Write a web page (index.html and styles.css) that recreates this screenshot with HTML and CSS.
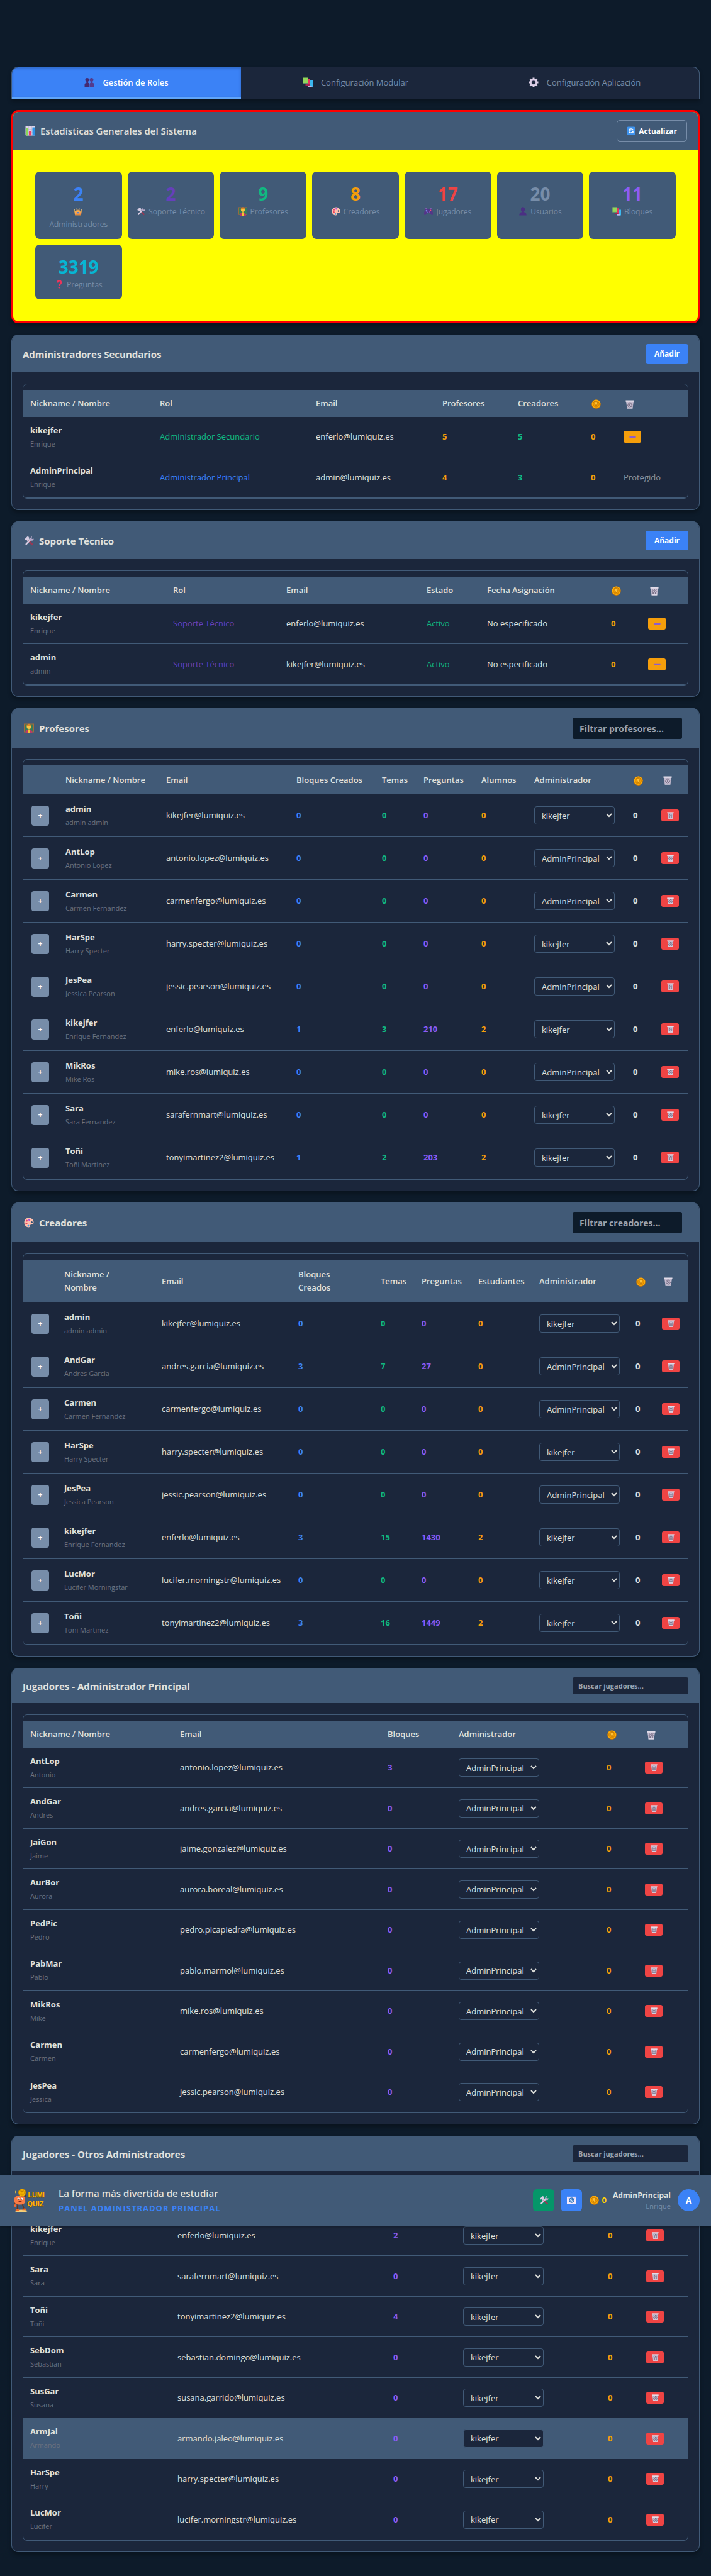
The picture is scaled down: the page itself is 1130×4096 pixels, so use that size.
FILE: index.html
```html
<!DOCTYPE html>
<html lang="es">
<head>
<meta charset="utf-8">
<meta name="viewport" content="width=device-width, initial-scale=1">
<title>LumiQuiz - Panel Administrador Principal</title>
<link rel="stylesheet" href="styles.css">
</head>
<body>
<svg class="sprite" aria-hidden="true">
  <symbol id="i-people" viewBox="0 0 32 32"><g fill="#432a72"><circle cx="9" cy="8" r="6"/><path d="M7 12h5v5c3 1 4 3 4 6v8H1v-8c0-3 2-5 6-6z"/></g><g fill="#533a8c"><circle cx="23" cy="8" r="6"/><path d="M20 12h6v5c4 1 5 3 5 6v8H17v-8c0-3 1-5 3-6z"/></g></symbol>
  <symbol id="i-person" viewBox="0 0 32 32"><g fill="#4b2f83"><ellipse cx="16" cy="9" rx="7" ry="8.500"/><path d="M12 14h8v5c6 1 9 4 9 12H3c0-8 3-11 9-12z"/></g></symbol>
  <symbol id="i-books" viewBox="0 0 32 32"><path fill="#3bb8f0" d="M18 10h14v21H16z"/><path fill="#c9b3e8" d="M16 27h13v4H16z"/><path fill="#e8305f" d="M11 5h13v20H11z"/><path fill="#a82350" d="M9 22h13v4H9z"/><path fill="#92d75a" d="M1 1h15v18H1z"/><path fill="#5e8d6a" d="M1 18h15v4H1z"/></symbol>
  <symbol id="i-gear" viewBox="0 0 32 32"><g fill="#dccfe6"><path d="M13 1h6v30h-6zM1 13h30v6H1z"/><path d="M13 1h6v30h-6zM1 13h30v6H1z" transform="rotate(45 16 16)"/><circle cx="16" cy="16" r="12"/></g><circle cx="16" cy="16" r="7" fill="#a996b8"/><circle cx="16" cy="16" r="5" fill="#1b263b"/></symbol>
  <symbol id="i-chart" viewBox="0 0 32 32"><rect x="1" y="1" width="30" height="30" rx="2" fill="#ded5e8"/><path d="M11 1v30M21 1v30M1 11h30M1 21h30" stroke="#b9a8c9"/><path fill="#8bd957" d="M2 8h8v23H2z"/><path fill="#ef3e68" d="M12 17h8v14h-8z"/><path fill="#2c93e6" d="M23 5h7v26h-7z"/></symbol>
  <symbol id="i-refresh" viewBox="0 0 32 32"><rect x="1" y="1" width="30" height="30" rx="4" fill="#3f94ef"/><g fill="none" stroke="#fff" stroke-width="3"><path d="M23 12a8 8 0 0 0-14 2M9 20a8 8 0 0 0 14-3"/><path d="M9 8v6h6M23 23v-6h-6"/></g></symbol>
  <symbol id="i-crown" viewBox="0 0 32 32"><path fill="#f8ad4d" d="M2 11l7 6 3-12 4 8 4-8 3 12 7-6-3 19H5z"/><path fill="#e68a35" d="M5 25h22v5H5z"/><circle cx="16" cy="21" r="3" fill="#4679df"/><g fill="#f15170"><circle cx="9" cy="22" r="2"/><circle cx="23" cy="22" r="2"/></g><g fill="#ffd38a"><circle cx="12" cy="4" r="2"/><circle cx="20" cy="4" r="2"/><circle cx="2" cy="10" r="2"/><circle cx="30" cy="10" r="2"/></g></symbol>
  <symbol id="i-tools" viewBox="0 0 32 32"><path d="M12 13l16 16" stroke="#963a55" stroke-width="6"/><path d="M3 10l8-8 6 2-2 2 3 5-6 6-4-4-3 1z" fill="#d5cce2"/><path d="M6 28l15-16" stroke="#d9cde3" stroke-width="5"/><path d="M19 9l5-7 2 1-2 5 2 2 5-1c1 5-3 8-9 6z" fill="#b9a9ca"/></symbol>
  <symbol id="i-teacher" viewBox="0 0 32 32"><path fill="#a06b3d" d="M0 1h32v28H0z"/><path fill="#377b58" d="M2 3h28v24H2z"/><path fill="#b93a68" d="M5 32c0-9 4-12 11-12s11 3 11 12z"/><path fill="#f6c42f" d="M13 19h6v13h-6z"/><circle cx="16" cy="11" r="7" fill="#fac342"/><path fill="#dc8426" d="M8 11c0-13 16-13 16 0-3-4-11-4-16 0z"/><path d="M13 15h6" stroke="#985522" stroke-width="2"/></symbol>
  <symbol id="i-palette" viewBox="0 0 32 32"><path fill="#ffc0ad" d="M16 1C6 1 1 8 1 16c0 9 7 15 14 15 6 0 2-6 6-8 3-2 10 1 10-8C31 7 25 1 16 1z"/><circle cx="25" cy="15" r="3" fill="#315073"/><circle cx="17" cy="7" r="3" fill="#b04de1"/><circle cx="9" cy="10" r="3" fill="#e74070"/><circle cx="8" cy="19" r="3" fill="#ea4158"/><circle cx="14" cy="26" r="3" fill="#3a9cec"/></symbol>
  <symbol id="i-pad" viewBox="0 0 32 32"><path fill="#543589" d="M6 7h20c4 3 6 13 6 21-3 4-8 0-10-5H10C8 28 3 32 0 28 0 20 2 10 6 7z"/><path fill="#8060b0" d="M5 4h6v3H5zM21 4h6v3h-6z"/><circle cx="9" cy="14" r="3" fill="#7488de"/><circle cx="21" cy="18" r="2" fill="#ba67c8"/><circle cx="24" cy="12" r="2" fill="#ec5972"/><circle cx="14" cy="19" r="2" fill="#6b88df"/></symbol>
  <symbol id="i-question" viewBox="0 0 32 32"><path d="M10 10c0-9 13-9 13 0 0 6-7 5-7 12" fill="none" stroke="#ee345b" stroke-width="5"/><circle cx="16" cy="28" r="3" fill="#ee345b"/></symbol>
  <symbol id="i-coin" viewBox="0 0 32 32"><circle cx="16" cy="16.500" r="15.500" fill="#c97400"/><circle cx="16" cy="15.500" r="14.500" fill="#ffae0b"/><circle cx="16" cy="15.500" r="10.500" fill="#f29b00" stroke="#c57d00" stroke-width="2"/><path d="M11 12c0-6 10-6 10 0 0 4-3 5-3 10h-4c0-5-3-6-3-10z" fill="#ffc239" stroke="#ad6900" stroke-width="1.500"/></symbol>
  <symbol id="i-bin" viewBox="0 0 32 32"><path fill="#c5bdd1" d="M2 3h28l-4 28H6z"/><path d="M8 9l15 17M14 8l11 12M7 17l8 10M24 9L9 26M18 8L7 20M25 17l-8 10" stroke="#70677e" stroke-width="2"/><path fill="#e2dce9" d="M1 1h30v5H1z"/><path fill="#ddd7e5" d="M6 27h20v4H6z"/></symbol>
  <symbol id="i-minus" viewBox="0 0 32 32"><rect x="1" y="14" width="30" height="6" rx="2" fill="#8b5ccf"/></symbol>
  <symbol id="i-mail" viewBox="0 0 32 32"><path fill="#f2e8fa" d="M0 4h32v24H0z"/><path fill="none" stroke="#d6c1e5" stroke-width="2" d="M1 5l15 13L31 5"/><circle cx="16" cy="16" r="9" fill="#2f72be"/><circle cx="16" cy="16" r="5" fill="none" stroke="#c7e1fb" stroke-width="2"/><circle cx="16" cy="16" r="2" fill="#c7e1fb"/></symbol>
</svg>

<main class="page">
  <nav class="tabs" aria-label="Secciones">
    <button class="tab tab-active" type="button"><svg class="icon"><use href="#i-people"/></svg>Gestión de Roles</button>
    <button class="tab" type="button"><svg class="icon"><use href="#i-books"/></svg>Configuración Modular</button>
    <button class="tab" type="button"><svg class="icon"><use href="#i-gear"/></svg>Configuración Aplicación</button>
  </nav>

  <section class="stats">
    <header class="panel-head">
      <h2 class="panel-title"><svg class="icon"><use href="#i-chart"/></svg>Estadísticas Generales del Sistema</h2>
      <button class="refresh" type="button"><svg class="icon"><use href="#i-refresh"/></svg>Actualizar</button>
    </header>
    <div class="stats-grid">
      <div class="stat"><strong class="stat-value blue">2</strong><span class="stat-label"><svg class="icon"><use href="#i-crown"/></svg> Administradores</span></div>
      <div class="stat"><strong class="stat-value violet">2</strong><span class="stat-label"><svg class="icon"><use href="#i-tools"/></svg> Soporte Técnico</span></div>
      <div class="stat"><strong class="stat-value green">9</strong><span class="stat-label"><svg class="icon"><use href="#i-teacher"/></svg> Profesores</span></div>
      <div class="stat"><strong class="stat-value orange">8</strong><span class="stat-label"><svg class="icon"><use href="#i-palette"/></svg> Creadores</span></div>
      <div class="stat"><strong class="stat-value red">17</strong><span class="stat-label"><svg class="icon"><use href="#i-pad"/></svg> Jugadores</span></div>
      <div class="stat"><strong class="stat-value muted">20</strong><span class="stat-label"><svg class="icon"><use href="#i-person"/></svg> Usuarios</span></div>
      <div class="stat"><strong class="stat-value purple">11</strong><span class="stat-label"><svg class="icon"><use href="#i-books"/></svg> Bloques</span></div>
      <div class="stat"><strong class="stat-value cyan">3319</strong><span class="stat-label"><svg class="icon"><use href="#i-question"/></svg> Preguntas</span></div>
    </div>
  </section>

  <section class="panel">
    <header class="panel-head">
      <h2 class="panel-title">Administradores Secundarios</h2>
      <button class="add" type="button">Añadir</button>
    </header>
    <div class="table-box">
      <table class="grid grid-admins">
        <thead><tr><th>Nickname / Nombre</th><th>Rol</th><th>Email</th><th>Profesores</th><th>Creadores</th><th><svg class="icon coin"><use href="#i-coin"/></svg></th><th><svg class="icon bin"><use href="#i-bin"/></svg></th></tr></thead>
        <tbody>
          <tr><td><b class="nick">kikejfer</b><span class="name">Enrique</span></td><td class="green">Administrador Secundario</td><td>enferlo@lumiquiz.es</td><td class="num orange">5</td><td class="num green">5</td><td class="num orange">0</td><td><button class="mini warn" type="button" aria-label="Quitar"><svg class="icon"><use href="#i-minus"/></svg></button></td></tr>
          <tr><td><b class="nick">AdminPrincipal</b><span class="name">Enrique</span></td><td class="blue">Administrador Principal</td><td>admin@lumiquiz.es</td><td class="num orange">4</td><td class="num green">3</td><td class="num orange">0</td><td class="locked">Protegido</td></tr>
        </tbody>
      </table>
    </div>
  </section>

  <section class="panel">
    <header class="panel-head">
      <h2 class="panel-title"><svg class="icon"><use href="#i-tools"/></svg>Soporte Técnico</h2>
      <button class="add" type="button">Añadir</button>
    </header>
    <div class="table-box">
      <table class="grid grid-support">
        <thead><tr><th>Nickname / Nombre</th><th>Rol</th><th>Email</th><th>Estado</th><th>Fecha Asignación</th><th><svg class="icon coin"><use href="#i-coin"/></svg></th><th><svg class="icon bin"><use href="#i-bin"/></svg></th></tr></thead>
        <tbody>
          <tr><td><b class="nick">kikejfer</b><span class="name">Enrique</span></td><td class="violet">Soporte Técnico</td><td>enferlo@lumiquiz.es</td><td class="green">Activo</td><td>No especificado</td><td class="num orange">0</td><td><button class="mini warn" type="button" aria-label="Quitar"><svg class="icon"><use href="#i-minus"/></svg></button></td></tr>
          <tr><td><b class="nick">admin</b><span class="name">admin</span></td><td class="violet">Soporte Técnico</td><td>kikejfer@lumiquiz.es</td><td class="green">Activo</td><td>No especificado</td><td class="num orange">0</td><td><button class="mini warn" type="button" aria-label="Quitar"><svg class="icon"><use href="#i-minus"/></svg></button></td></tr>
        </tbody>
      </table>
    </div>
  </section>

  <section class="panel">
    <header class="panel-head">
      <h2 class="panel-title"><svg class="icon"><use href="#i-teacher"/></svg>Profesores</h2>
      <input class="filter" type="text" placeholder="Filtrar profesores..." aria-label="Filtrar profesores">
    </header>
    <div class="table-box">
      <table class="grid grid-staff grid-teachers">
        <thead><tr><th></th><th>Nickname / Nombre</th><th>Email</th><th>Bloques Creados</th><th>Temas</th><th>Preguntas</th><th>Alumnos</th><th>Administrador</th><th><svg class="icon coin"><use href="#i-coin"/></svg></th><th><svg class="icon bin"><use href="#i-bin"/></svg></th></tr></thead>
        <tbody id="teachers"></tbody>
      </table>
    </div>
  </section>

  <section class="panel">
    <header class="panel-head">
      <h2 class="panel-title"><svg class="icon"><use href="#i-palette"/></svg>Creadores</h2>
      <input class="filter" type="text" placeholder="Filtrar creadores..." aria-label="Filtrar creadores">
    </header>
    <div class="table-box">
      <table class="grid grid-staff grid-creators">
        <thead><tr><th></th><th>Nickname /<br>Nombre</th><th>Email</th><th>Bloques<br>Creados</th><th>Temas</th><th>Preguntas</th><th>Estudiantes</th><th>Administrador</th><th><svg class="icon coin"><use href="#i-coin"/></svg></th><th><svg class="icon bin"><use href="#i-bin"/></svg></th></tr></thead>
        <tbody id="creators"></tbody>
      </table>
    </div>
  </section>

  <section class="panel">
    <header class="panel-head">
      <h2 class="panel-title">Jugadores - Administrador Principal</h2>
      <input class="search" type="text" placeholder="Buscar jugadores..." aria-label="Buscar jugadores del administrador principal">
    </header>
    <div class="table-box">
      <table class="grid grid-players">
        <thead><tr><th>Nickname / Nombre</th><th>Email</th><th>Bloques</th><th>Administrador</th><th><svg class="icon coin"><use href="#i-coin"/></svg></th><th><svg class="icon bin"><use href="#i-bin"/></svg></th></tr></thead>
        <tbody id="players-main"></tbody>
      </table>
    </div>
  </section>

  <div class="pin-area">
    <section class="panel">
      <header class="panel-head">
        <h2 class="panel-title">Jugadores - Otros Administradores</h2>
        <input class="search" type="text" placeholder="Buscar jugadores..." aria-label="Buscar jugadores de otros administradores">
      </header>
      <div class="table-box">
        <table class="grid grid-players grid-others">
          <thead><tr><th>Nickname / Nombre</th><th>Email</th><th>Bloques</th><th>Administrador</th><th><svg class="icon coin"><use href="#i-coin"/></svg></th><th><svg class="icon bin"><use href="#i-bin"/></svg></th></tr></thead>
          <tbody id="players-others"></tbody>
        </table>
      </div>
    </section>

    <header class="topbar">
      <svg class="logo" viewBox="0 0 60 42" role="img" aria-label="LumiQuiz">
        <ellipse cx="13" cy="39.500" rx="11" ry="2.300" fill="#f5cf78"/>
        <path d="M7 27l-1 10M15 27l3 9M3 22l-1 7M18 18l3-7" stroke="#63351f" stroke-width="2" fill="none"/>
        <path d="M3 39c0-3 3-4 6-3v3zM15 38c0-3 4-4 7-2v2z" fill="#f26522"/>
        <circle cx="2.500" cy="30" r="2.300" fill="#f26a35"/>
        <path d="M1 20c-1-6 5-8 9-7 5-2 11 1 10 7 1 6-4 9-9 8-6 1-11-2-10-8z" fill="#f97b45"/>
        <circle cx="8" cy="18" r="2" fill="#fff"/><circle cx="14" cy="18" r="2" fill="#fff"/><circle cx="8.500" cy="18.500" r="1" fill="#35221d"/><circle cx="13.500" cy="18.500" r="1" fill="#35221d"/>
        <path d="M8 22c2 3 4 3 6 0z" fill="#7c231c"/>
        <circle cx="14.500" cy="7" r="6.500" fill="#f7b500" stroke="#b87900"/><circle cx="14.500" cy="7" r="4" fill="none" stroke="#c98c00"/><path d="M13 9V5h3v4" stroke="#b87900" fill="none"/>
        <path d="M3 4v4M1 6h4" stroke="#ffd33d"/>
        <text class="logo-text" x="25" y="16">LUMI</text><text class="logo-text" x="24" y="31">QUIZ</text>
      </svg>
      <div class="brand"><p class="slogan">La forma más divertida de estudiar</p><p class="role">PANEL ADMINISTRADOR PRINCIPAL</p></div>
      <button class="square square-green" type="button" aria-label="Soporte"><svg class="icon"><use href="#i-tools"/></svg></button>
      <button class="square square-blue" type="button" aria-label="Mensajes"><svg class="icon"><use href="#i-mail"/></svg></button>
      <div class="balance"><svg class="icon"><use href="#i-coin"/></svg>0</div>
      <div class="user"><b class="user-nick">AdminPrincipal</b><span class="user-name">Enrique</span></div>
      <button class="avatar" type="button">A</button>
    </header>
  </div>
</main>
<script src="app.js"></script>
</body>
</html>
```
FILE: styles.css
```css
:root {
  --bg: #0d1b2a;
  --panel: #1b263b;
  --line: #415a77;
  --muted: #778da9;
  --text: #e0e1dd;
}

* { box-sizing: border-box; }

body {
  margin: 0;
  background: var(--bg);
  color: var(--text);
  font-family: "Open Sans", "Noto Sans", sans-serif;
  font-size: 13px;
  line-height: 21px;
}

h2, p { margin: 0; }
button, input, select { font-family: inherit; color: inherit; margin: 0; }
button { border: 0; padding: 0; cursor: pointer; }

.sprite { position: absolute; width: 0; height: 0; }
.icon { width: 14px; height: 14px; flex: none; }

.blue { color: #3b82f6; }
.violet { color: #6540bb; }
.green { color: #10b981; }
.orange { color: #f59e0b; }
.red { color: #ef4444; }
.muted { color: var(--muted); }
.purple { color: #8b5cf6; }
.cyan { color: #06b6d4; }

.page {
  display: flex;
  flex-direction: column;
  gap: 18px;
  padding: 106px 18px 36px;
}

.tabs {
  display: flex;
  height: 51px;
  background: var(--panel);
  border: 1px solid var(--line);
  border-bottom: 0;
  border-radius: 11px 11px 0 0;
  overflow: hidden;
  box-shadow: 0 4px 6px rgba(0, 0, 0, 0.3);
}
.tab {
  flex: 1;
  display: flex;
  align-items: center;
  justify-content: center;
  gap: 13px;
  background: none;
  border-bottom: 3px solid transparent;
  color: var(--muted);
  font-size: 13px;
  font-weight: 500;
}
.tab .icon { width: 16px; height: 16px; }
.tab-active {
  background: #3b82f6;
  border-bottom-color: #60a5fa;
  color: #fff;
  font-weight: 600;
  box-shadow: inset 0 2px 4px rgba(0, 0, 0, 0.2);
}

.stats {
  background: #ff0;
  border: 3px solid #f00;
  border-radius: 11px;
  overflow: hidden;
  box-shadow: 0 4px 6px rgba(0, 0, 0, 0.3);
}
.stats-grid {
  display: grid;
  grid-template-columns: repeat(7, 1fr);
  gap: 9px;
  padding: 35px;
}
.stat {
  display: flex;
  flex-direction: column;
  padding: 16px 12px 13px;
  background: var(--line);
  border-radius: 7px;
  text-align: center;
}
.stat-value { font-size: 28px; line-height: 38px; font-weight: 700; }
.stat-label { color: var(--muted); font-size: 12px; line-height: 20px; }
.stat-label .icon { vertical-align: -2px; margin-right: 2px; }
.stat:first-child .stat-label { padding: 0 8px; }

.panel-head {
  display: flex;
  align-items: center;
  justify-content: space-between;
  padding: 14px 18px;
  background: var(--line);
}
.stats .panel-head { padding: 13px 17px; }
.panel-title {
  display: flex;
  align-items: center;
  gap: 8px;
  font-size: 15px;
  line-height: 24px;
  font-weight: 700;
}
.stats .panel-title { font-weight: 600; }
.panel-title .icon { width: 16px; height: 16px; margin-left: 2px; }
.refresh {
  display: flex;
  align-items: center;
  gap: 5px;
  height: 34px;
  padding: 0 15px;
  background: none;
  border: 1px solid var(--muted);
  border-radius: 5px;
  color: #fff;
  font-size: 12px;
  font-weight: 700;
}
.add {
  height: 31px;
  padding: 0 14px;
  border-radius: 4px;
  background: #3b82f6;
  color: #fff;
  font-size: 12px;
  font-weight: 700;
}
.filter, .search {
  border: 0;
  border-radius: 3px;
  font-weight: 700;
}
.filter {
  width: 174px;
  height: 34px;
  margin-right: 10px;
  padding: 0 11px;
  background: var(--bg);
  font-size: 14px;
}
.search {
  width: 184px;
  height: 27px;
  padding: 0 9px;
  background: var(--panel);
  font-size: 11px;
}
::placeholder { color: #9ca3af; opacity: 1; }

.panel {
  background: var(--panel);
  border: 1px solid var(--line);
  border-top: 0;
  border-radius: 11px;
  overflow: hidden;
  box-shadow: 0 4px 6px rgba(0, 0, 0, 0.3);
}
.panel .panel-head { border-top: 1px solid var(--line); padding: 14px 17px; }
.table-box {
  margin: 18px 17px 17px;
  padding-top: 9px;
  border: 1px solid var(--line);
  border-radius: 7px;
  overflow: hidden;
}

.grid {
  width: 100%;
  table-layout: fixed;
  border-collapse: separate;
  border-spacing: 0;
}
.grid th, .grid td { padding: 0 0 0 11px; text-align: left; white-space: nowrap; }
.grid th { height: 43px; background: var(--line); font-weight: 600; }
.grid td { height: 64px; border-bottom: 1px solid var(--line); }
.grid tr:nth-child(even) td { height: 65px; }
.grid .coin { width: 15px; height: 15px; margin-left: 1px; vertical-align: middle; }
.grid .bin { margin-left: 3px; vertical-align: middle; }
.nick, .name { display: block; line-height: 22px; }
.nick { font-weight: 700; }
.name { color: #6b7280; font-size: 11px; font-weight: 400; }
.num { font-weight: 700; }
.locked { color: #8b93a1; }

.grid-staff th { height: 46px; }
.grid-staff td, .grid-staff tr:nth-child(even) td { height: 68px; }
.grid-staff td:first-child { padding-left: 13px; }
.grid-creators th { height: 68px; }

.grid-admins th:nth-child(1) { width: 206px; }
.grid-admins th:nth-child(2) { width: 248px; }
.grid-admins th:nth-child(3) { width: 201px; }
.grid-admins th:nth-child(4) { width: 120px; }
.grid-admins th:nth-child(5) { width: 116px; }
.grid-admins th:nth-child(6) { width: 52px; }
.grid-admins th:nth-child(7) { width: 113px; }

.grid-support th:nth-child(1) { width: 227px; }
.grid-support th:nth-child(2) { width: 180px; }
.grid-support th:nth-child(3) { width: 223px; }
.grid-support th:nth-child(4) { width: 96px; }
.grid-support th:nth-child(5) { width: 197px; }
.grid-support th:nth-child(6) { width: 59px; }
.grid-support th:nth-child(7) { width: 74px; }

.grid-teachers th:nth-child(1) { width: 56px; }
.grid-teachers th:nth-child(2) { width: 160px; }
.grid-teachers th:nth-child(3) { width: 207px; }
.grid-teachers th:nth-child(4) { width: 136px; }
.grid-teachers th:nth-child(5) { width: 66px; }
.grid-teachers th:nth-child(6) { width: 92px; }
.grid-teachers th:nth-child(7) { width: 84px; }
.grid-teachers th:nth-child(8) { width: 157px; }
.grid-teachers th:nth-child(9) { width: 45px; }
.grid-teachers th:nth-child(10) { width: 53px; }

.grid-creators th:nth-child(1) { width: 54px; }
.grid-creators th:nth-child(2) { width: 155px; }
.grid-creators th:nth-child(3) { width: 217px; }
.grid-creators th:nth-child(4) { width: 131px; }
.grid-creators th:nth-child(5) { width: 65px; }
.grid-creators th:nth-child(6) { width: 90px; }
.grid-creators th:nth-child(7) { width: 97px; }
.grid-creators th:nth-child(8) { width: 153px; }
.grid-creators th:nth-child(9) { width: 42px; }
.grid-creators th:nth-child(10) { width: 52px; }

.grid-players th:nth-child(1) { width: 238px; }
.grid-players th:nth-child(2) { width: 330px; }
.grid-players th:nth-child(3) { width: 113px; }
.grid-players th:nth-child(4) { width: 235px; }
.grid-players th:nth-child(5) { width: 61px; }
.grid-players th:nth-child(6) { width: 79px; }

.grid-others th:nth-child(1) { width: 234px; }
.grid-others th:nth-child(2) { width: 343px; }
.grid-others th:nth-child(3) { width: 111px; }
.grid-others th:nth-child(4) { width: 230px; }
.grid-others th:nth-child(6) { width: 77px; }

.row-current td { background: var(--line); }

.mini {
  display: flex;
  align-items: center;
  justify-content: center;
  width: 28px;
  height: 19px;
  border-radius: 3px;
}
.grid .mini .icon { width: 11px; height: 11px; }
.warn { background: #f59e0b; }
.danger { background: #ef4444; }
.expand {
  display: block;
  width: 28px;
  height: 32px;
  border-radius: 4px;
  background: var(--muted);
  color: #fff;
  font-size: 12px;
  font-weight: 700;
}
.owner {
  display: block;
  width: 128px;
  height: 29px;
  padding: 0 0 0 7px;
  border: 1px solid var(--line);
  border-radius: 4px;
  background-color: var(--panel);
  font-size: 13px;
}

.pin-area { position: relative; margin: 0 -18px; padding: 0 18px; }
.topbar {
  position: absolute;
  top: 62px;
  left: 0;
  right: 0;
  display: flex;
  align-items: center;
  height: 81px;
  padding: 0 18px 0 22px;
  background: var(--line);
  box-shadow: 0 2px 4px rgba(0, 0, 0, 0.3);
}
.logo { width: 54px; height: 38px; flex: none; }
.logo-text {
  font-family: "Liberation Sans", sans-serif;
  font-size: 12px;
  font-weight: 700;
  fill: #ffb800;
  stroke: #6e5100;
  stroke-width: 1px;
  paint-order: stroke;
}
.brand { flex: 1; padding-left: 17px; }
.slogan { font-size: 15px; line-height: 25px; font-weight: 600; }
.role { color: #3b82f6; font-size: 13px; line-height: 22px; font-weight: 700; letter-spacing: 1px; }
.square {
  display: flex;
  align-items: center;
  justify-content: center;
  width: 34px;
  height: 35px;
  margin-right: 10px;
  border-radius: 6px;
}
.square .icon { width: 15px; height: 15px; }
.square-green { background: #059669; }
.square-blue { background: #3b82f6; }
.balance {
  display: flex;
  align-items: center;
  gap: 4px;
  margin: 0 10px 0 2px;
  color: #ffd700;
  font-weight: 700;
}
.balance .icon { width: 15px; height: 15px; }
.user { text-align: right; }
.user-nick, .user-name { display: block; font-size: 12px; line-height: 17px; }
.user-name { color: var(--muted); font-size: 11px; }
.avatar {
  width: 35px;
  height: 35px;
  margin-left: 11px;
  border-radius: 50%;
  background: #3b82f6;
  color: #fff;
  font-size: 14px;
  font-weight: 700;
}
```
FILE: app.js
```js
// nick, name, email user, blocks, topics, questions, students, administrator
const K = 'kikejfer', P = 'AdminPrincipal';

const teachers = [
  ['admin', 'admin admin', 'kikejfer', 0, 0, 0, 0, K],
  ['AntLop', 'Antonio Lopez', 'antonio.lopez', 0, 0, 0, 0, P],
  ['Carmen', 'Carmen Fernandez', 'carmenfergo', 0, 0, 0, 0, P],
  ['HarSpe', 'Harry Specter', 'harry.specter', 0, 0, 0, 0, K],
  ['JesPea', 'Jessica Pearson', 'jessic.pearson', 0, 0, 0, 0, P],
  ['kikejfer', 'Enrique Fernandez', 'enferlo', 1, 3, 210, 2, K],
  ['MikRos', 'Mike Ros', 'mike.ros', 0, 0, 0, 0, P],
  ['Sara', 'Sara Fernandez', 'sarafernmart', 0, 0, 0, 0, K],
  ['Toñi', 'Toñi Martinez', 'tonyimartinez2', 1, 2, 203, 2, K],
];
const creators = [
  ['admin', 'admin admin', 'kikejfer', 0, 0, 0, 0, K],
  ['AndGar', 'Andres Garcia', 'andres.garcia', 3, 7, 27, 0, P],
  ['Carmen', 'Carmen Fernandez', 'carmenfergo', 0, 0, 0, 0, P],
  ['HarSpe', 'Harry Specter', 'harry.specter', 0, 0, 0, 0, K],
  ['JesPea', 'Jessica Pearson', 'jessic.pearson', 0, 0, 0, 0, P],
  ['kikejfer', 'Enrique Fernandez', 'enferlo', 3, 15, 1430, 2, K],
  ['LucMor', 'Lucifer Morningstar', 'lucifer.morningstr', 0, 0, 0, 0, K],
  ['Toñi', 'Toñi Martinez', 'tonyimartinez2', 3, 16, 1449, 2, K],
];

// nick, name, email user, blocks, administrator, highlighted
const playersMain = [
  ['AntLop', 'Antonio', 'antonio.lopez', 3, P],
  ['AndGar', 'Andres', 'andres.garcia', 0, P],
  ['JaiGon', 'Jaime', 'jaime.gonzalez', 0, P],
  ['AurBor', 'Aurora', 'aurora.boreal', 0, P],
  ['PedPic', 'Pedro', 'pedro.picapiedra', 0, P],
  ['PabMar', 'Pablo', 'pablo.marmol', 0, P],
  ['MikRos', 'Mike', 'mike.ros', 0, P],
  ['Carmen', 'Carmen', 'carmenfergo', 0, P],
  ['JesPea', 'Jessica', 'jessic.pearson', 0, P],
];
const playersOthers = [
  ['kikejfer', 'Enrique', 'enferlo', 2, K],
  ['Sara', 'Sara', 'sarafernmart', 0, K],
  ['Toñi', 'Toñi', 'tonyimartinez2', 4, K],
  ['SebDom', 'Sebastian', 'sebastian.domingo', 0, K],
  ['SusGar', 'Susana', 'susana.garrido', 0, K],
  ['ArmJal', 'Armando', 'armando.jaleo', 0, K, true],
  ['HarSpe', 'Harry', 'harry.specter', 0, K],
  ['LucMor', 'Lucifer', 'lucifer.morningstr', 0, K],
];

const person = (nick, name) => `<td><b class="nick">${nick}</b><span class="name">${name}</span></td>`;
const email = (user) => `<td>${user}@lumiquiz.es</td>`;
const num = (value, color) => `<td class="num ${color}">${value}</td>`;
const owner = (nick, selected) => `<td><select class="owner" aria-label="Administrador de ${nick}">${
  [P, K].map((o) => `<option${o === selected ? ' selected' : ''}>${o}</option>`).join('')}</select></td>`;
const remove = '<td><button class="mini danger" type="button" aria-label="Eliminar"><svg class="icon"><use href="#i-bin"/></svg></button></td>';

const staffRow = ([nick, name, user, blocks, topics, questions, students, admin]) => `<tr>
  <td><button class="expand" type="button" aria-label="Desplegar ${nick}">+</button></td>
  ${person(nick, name)}${email(user)}${num(blocks, 'blue')}${num(topics, 'green')}${num(questions, 'purple')}
  ${num(students, 'orange')}${owner(nick, admin)}${num(0, '')}${remove}</tr>`;

const playerRow = ([nick, name, user, blocks, admin, current]) => `<tr${current ? ' class="row-current"' : ''}>
  ${person(nick, name)}${email(user)}${num(blocks, 'purple')}${owner(nick, admin)}${num(0, 'orange')}${remove}</tr>`;

const fill = (id, rows, render) => { document.getElementById(id).innerHTML = rows.map(render).join(''); };

fill('teachers', teachers, staffRow);
fill('creators', creators, staffRow);
fill('players-main', playersMain, playerRow);
fill('players-others', playersOthers, playerRow);
```
